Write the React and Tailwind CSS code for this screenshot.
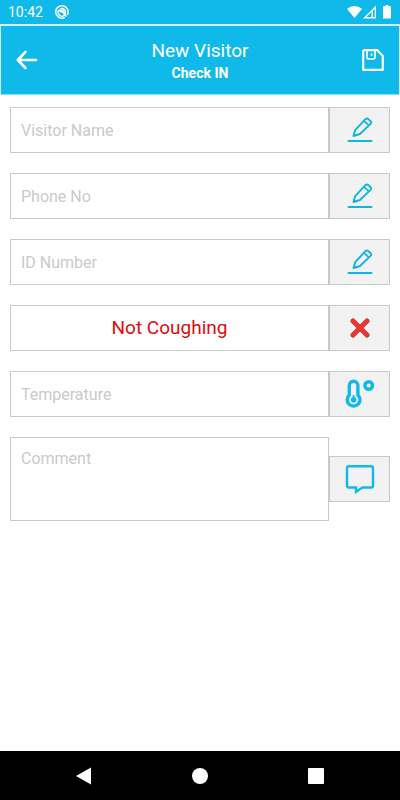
import { useState } from "react";

const PencilIcon = () => (
  <svg width="26" height="28" viewBox="0 0 26 28" fill="none" stroke="#12b4e4" strokeLinejoin="round" aria-hidden="true">
    <path strokeWidth="1.9" d="M6.5 20 8.2 14.200 18.400 3.200Q19.800 1.900 21.300 3.100L23.400 5Q24.900 6.400 23.500 7.900L13 18Z" />
    <path strokeWidth="1.8" d="M17 4.900 21.900 9.400M6.500 17.800 8.800 19.600" />
    <path strokeWidth="2" strokeLinecap="round" d="M1.500 25H24.500" />
  </svg>
);

const CrossIcon = () => (
  <svg width="20" height="20" viewBox="0 0 20 20" fill="none" strokeLinecap="round" aria-hidden="true">
    <path stroke="#cf2b2b" strokeWidth="5" d="M3 3 17 17M17 3 3 17" />
    <path stroke="#e53935" strokeWidth="4" d="M3 3 17 17M17 3 3 17" />
  </svg>
);

const ThermometerIcon = () => (
  <svg width="30" height="30" viewBox="0 0 30 30" fill="none" stroke="#0fb9ea" aria-hidden="true">
    <path strokeWidth="3.400" d="M4.300 6.500a4.300 4.300 0 0 1 8.600 0V16a6.400 6.400 0 1 1-8.600 0Z" />
    <circle cx="8.600" cy="20.800" r="2.800" fill="#0fb9ea" stroke="none" />
    <path strokeWidth="1.800" d="M8.600 16V20" />
    <circle cx="23.700" cy="6.500" r="3.800" strokeWidth="3.400" />
  </svg>
);

const CommentIcon = () => (
  <svg width="30" height="30" viewBox="0 0 30 30" fill="none" stroke="#0fb9ea" strokeWidth="2.4" aria-hidden="true">
    <path d="M4 2.200H26Q28 2.200 28 4.200V21.500Q28 23.500 26 23.500H17.500L11 27.800V23.500H4Q2 23.500 2 21.500V4.200Q2 2.200 4 2.200Z" />
  </svg>
);

function StatusBar() {
  return (
    <div className="flex h-6 items-center bg-[#0fbaea] px-2 text-white">
      <span className="text-sm">10:42</span>
      <svg className="ml-3" width="14" height="14" viewBox="0 0 14 14" fill="none" stroke="white" aria-hidden="true">
        <path strokeWidth="1.500" d="M9.800 12.400A6.200 6.200 0 1 1 12.400 9.800" />
        <path strokeWidth="1.300" d="M9.300 10.400A3.900 3.900 0 0 1 3.800 5M5.500 3.600A3.900 3.900 0 0 1 10.500 8.300" />
        <path fill="white" stroke="none" d="M4.200 4.200 8 4.500 10.200 7.500 12 12 9.200 10.800 7.800 8 4.200 7Z" />
      </svg>
      <svg className="ml-auto" width="46" height="14" viewBox="0 0 46 14" fill="white" aria-hidden="true">
        <path d="M1 3.800Q8.500-2 16 3.800L8.500 13Z" />
        <path fillRule="evenodd" d="M17 13.500 30 .5V13.500ZM20.500 12.100H25.500V7.100ZM27 5.600V12.100H28.700V4Z" />
        <path d="M39.500 0H42.500V1.200H45V13.500H37V1.200H39.500Z" />
      </svg>
    </div>
  );
}

function Header() {
  return (
    <header className="mx-px mt-[2px] flex h-[69px] items-center justify-between border-b border-[#8fdcf4] bg-[#0fbaea] px-3 text-white">
      <button type="button" aria-label="Back" className="flex w-8 justify-start pl-[3px]">
        <svg width="22" height="20" viewBox="0 0 22 20" fill="none" stroke="white" strokeWidth="2.600" strokeLinecap="round" strokeLinejoin="round" aria-hidden="true">
          <path d="M20 10H1.800M9.500 1.800 1.800 10 9.500 18" />
        </svg>
      </button>
      <div className="pt-[2px] text-center">
        <h1 className="text-[19px] leading-6">New Visitor</h1>
        <p className="text-sm leading-5 font-bold">Check IN</p>
      </div>
      <button type="button" aria-label="Save" className="flex w-8 justify-end pr-[3px]">
        <svg width="22" height="22" viewBox="0 0 22 22" fill="none" stroke="white" strokeLinejoin="round" aria-hidden="true">
          <path strokeWidth="2.200" d="M2 1.200H15.300L20.800 7V20.800H1.200V2Z" />
          <path strokeWidth="1.700" d="M5 1.500V8Q5 10 7 10H11Q13 10 13 8V1.500M9.500 4.500V6.800" />
        </svg>
      </button>
    </header>
  );
}

function Row({ children, icon, label }) {
  return (
    <div className="flex items-center">
      {children}
      <button
        type="button"
        aria-label={label}
        className="flex h-[46px] w-[61px] shrink-0 items-center justify-center border border-[#c8c8c8] bg-[#f2f2f2]"
      >
        {icon}
      </button>
    </div>
  );
}

const fieldClass =
  "min-w-0 flex-1 border border-[#c8c8c8] bg-white px-[10px] text-base text-gray-800 placeholder:text-[#cacaca] outline-none";

export default function App() {
  const [coughing, setCoughing] = useState(false);
  const toggleCoughing = () => setCoughing(!coughing);

  return (
    <div className="flex min-h-screen flex-col bg-white font-['Roboto',sans-serif]">
      <div className="bg-[#d3effa]">
        <StatusBar />
        <Header />
      </div>

      <form className="flex flex-1 flex-col gap-5 px-[10px] pt-3" onSubmit={(e) => e.preventDefault()}>
        <Row icon={<PencilIcon />} label="Edit visitor name">
          <input type="text" aria-label="Visitor Name" placeholder="Visitor Name" className={`h-[46px] ${fieldClass}`} />
        </Row>
        <Row icon={<PencilIcon />} label="Edit phone number">
          <input type="tel" aria-label="Phone No" placeholder="Phone No" className={`h-[46px] ${fieldClass}`} />
        </Row>
        <Row icon={<PencilIcon />} label="Edit ID number">
          <input type="text" aria-label="ID Number" placeholder="ID Number" className={`h-[46px] ${fieldClass}`} />
        </Row>
        <Row icon={<CrossIcon />} label="Change coughing status">
          <button
            type="button"
            onClick={toggleCoughing}
            className="h-[46px] min-w-0 flex-1 border border-[#c8c8c8] bg-white text-[19px] text-[#d90d0d]"
          >
            {coughing ? "Coughing" : "Not Coughing"}
          </button>
        </Row>
        <Row icon={<ThermometerIcon />} label="Read temperature">
          <input type="text" inputMode="decimal" aria-label="Temperature" placeholder="Temperature" className={`h-[46px] ${fieldClass}`} />
        </Row>
        <Row icon={<CommentIcon />} label="Edit comment">
          <textarea aria-label="Comment" placeholder="Comment" className={`block h-[84px] resize-none py-[9px] ${fieldClass}`} />
        </Row>
      </form>

      <nav className="flex h-[49px] items-center justify-around bg-black px-[26px]">
        <button type="button" aria-label="System back">
          <svg width="16" height="18" viewBox="0 0 16 18" fill="white" aria-hidden="true">
            <path d="M15 .5V17.500L0 9Z" />
          </svg>
        </button>
        <button type="button" aria-label="Home" className="size-4 rounded-full bg-white" />
        <button type="button" aria-label="Recent apps" className="size-4 rounded-[1px] bg-white" />
      </nav>
    </div>
  );
}
